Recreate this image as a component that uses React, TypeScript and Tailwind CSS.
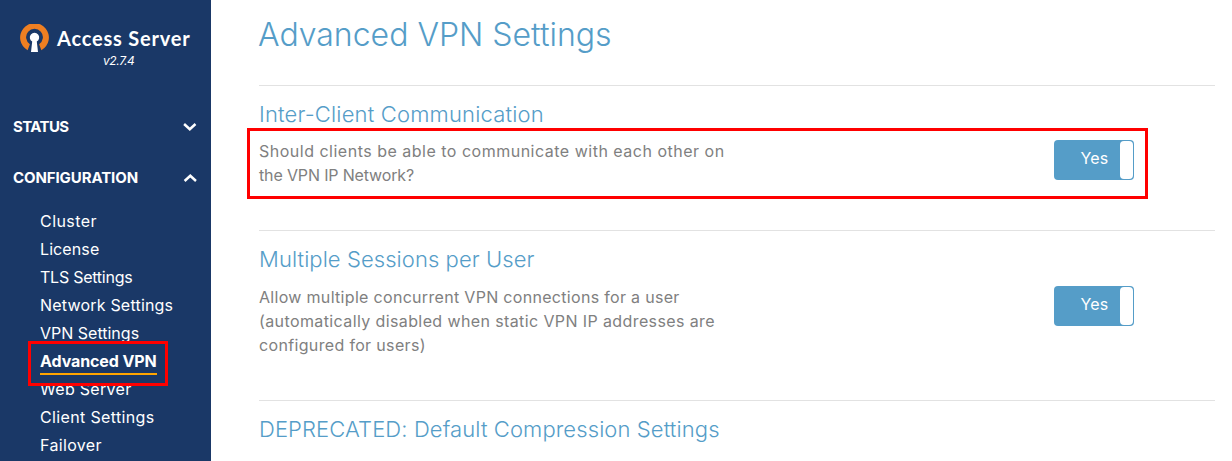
import type { ReactNode } from "react";

type NavItem = { label: string; spacing: string; active?: boolean };

const items: NavItem[] = [
  { label: "Cluster", spacing: "tracking-[0.45px]" },
  { label: "License", spacing: "tracking-[0.1px]" },
  { label: "TLS Settings", spacing: "tracking-[-0.25px]" },
  { label: "Network Settings", spacing: "tracking-[0.2px]" },
  { label: "VPN Settings", spacing: "tracking-[0px]" },
  { label: "Advanced VPN", spacing: "tracking-[-0.1px]", active: true },
  { label: "Web Server", spacing: "tracking-[0.3px]" },
  { label: "Client Settings", spacing: "tracking-[0.35px]" },
  { label: "Failover", spacing: "tracking-[0.35px]" },
];

function Logo() {
  return (
    <svg className="h-[29px] w-[30px] shrink-0" viewBox="0 0 30 29">
      <path d="M7.6 26.2A14.4 14.4 0 1 1 21.4 26.2L19.1 20.2A8.4 8.4 0 1 0 9.9 20.2Z" fill="#ee7f22" />
      <path d="M12.2 17.6A4.7 4.7 0 1 1 16.8 17.6L18 28H11Z" fill="#fff" />
    </svg>
  );
}

function Chevron({ up }: { up?: boolean }) {
  return (
    <svg className="h-2 w-[14px]" viewBox="0 0 14 8" fill="none" stroke="#fff" strokeWidth="2.5">
      <path d={up ? "M1.6 7L7.3 1.8L13 7" : "M1.1 1L6.8 6.2L12.5 1"} />
    </svg>
  );
}

function Toggle() {
  return (
    <div className="flex h-10 w-20 items-center rounded-[4px] bg-[#559dc8] p-px">
      <span className="flex-1 pb-[4px] pl-[14px] text-center text-[16px] leading-9 tracking-[0.2px] text-white">Yes</span>
      <span className="h-[38px] w-[13px] rounded-[4px] bg-white" />
    </div>
  );
}

function Heading({ children, className }: { children: ReactNode; className: string }) {
  return (
    <h2 className={`h-7 whitespace-nowrap text-[22px] font-light leading-7 text-[#559dc8] ${className}`}>
      {children}
    </h2>
  );
}

function Line({ children, className }: { children: ReactNode; className: string }) {
  return <span className={`block whitespace-nowrap ${className}`}>{children}</span>;
}

export default function App() {
  return (
    <div className="flex h-[461px] w-[1232px] overflow-hidden bg-white font-['Inter',sans-serif]">
      <aside className="w-[211px] shrink-0 bg-[#1a3867] text-white">
        <div className="flex h-[53px] items-start pl-5 pt-[24px]">
          <Logo />
          <span className="ml-[7px] whitespace-nowrap font-['Lato'] text-[20px] font-bold leading-7 tracking-[0.8px]">
            Access Server
          </span>
        </div>
        <div className="pl-[103px] text-[12px] italic leading-4 tracking-[-0.4px]">v2.7.4</div>
        <div className="mt-[46px] flex h-6 items-center justify-between pl-[13px] pr-[14px]">
          <span className="pt-px text-[15px] font-bold tracking-[-0.6px]">STATUS</span>
          <Chevron />
        </div>
        <div className="mt-[27px] flex h-6 items-center justify-between pl-[13px] pr-[14px]">
          <span className="pt-px text-[15px] font-bold tracking-[-0.1px]">CONFIGURATION</span>
          <Chevron up />
        </div>
        <nav className="mt-[17px] flex flex-col pl-10">
          {items.map((item) =>
            item.active ? (
              <div key={item.label} className="relative h-7">
                <span className={`block h-[28px] w-[117px] whitespace-nowrap border-b-2 border-[#ffa500] text-[16px] font-bold leading-7 ${item.spacing}`}>
                  {item.label}
                </span>
                <div className="absolute -left-3 -top-[6px] z-10 h-[45px] w-[140px] border-[3px] border-[#ff0000]" />
              </div>
            ) : (
              <span key={item.label} className={`h-7 whitespace-nowrap text-[16px] leading-7 ${item.spacing}`}>
                {item.label}
              </span>
            ),
          )}
        </nav>
      </aside>

      <main className="w-[1004px] pl-12 text-[#808080]">
        <h1 className="-ml-px h-[85px] whitespace-nowrap pt-[15px] text-[32px] font-light leading-10 text-[#559dc8]">
          Advanced VPN Settings
        </h1>
        <section className="relative h-[145px] border-t border-[#e2e2e2] pt-[14px]">
          <Heading className="tracking-[0.17px]">Inter-Client Communication</Heading>
          <div className="flex justify-between pr-[81px] pt-[11px]">
            <div className="text-[16px] leading-6">
              <Line className="tracking-[0.5px]">Should clients be able to communicate with each other on</Line>
              <Line className="tracking-[-0.15px]">the VPN IP Network?</Line>
            </div>
            <div className="pt-px"><Toggle /></div>
          </div>
          <div className="absolute -left-3 top-[42px] h-[71px] w-[901px] border-[3px] border-[#ff0000]" />
        </section>
        <section className="h-[170px] border-t border-[#e2e2e2] pt-[14px]">
          <Heading className="tracking-[0.07px]">Multiple Sessions per User</Heading>
          <div className="flex justify-between pr-[81px] pt-[12px]">
            <div className="text-[16px] leading-6">
              <Line className="tracking-[0.31px]">Allow multiple concurrent VPN connections for a user</Line>
              <Line className="tracking-[0.39px]">(automatically disabled when static VPN IP addresses are</Line>
              <Line className="tracking-[0.34px]">configured for users)</Line>
            </div>
            <div className="pt-px"><Toggle /></div>
          </div>
        </section>
        <section className="border-t border-[#e2e2e2] pt-[14px]">
          <Heading className="tracking-[0.1px]">DEPRECATED: Default Compression Settings</Heading>
        </section>
      </main>
    </div>
  );
}
